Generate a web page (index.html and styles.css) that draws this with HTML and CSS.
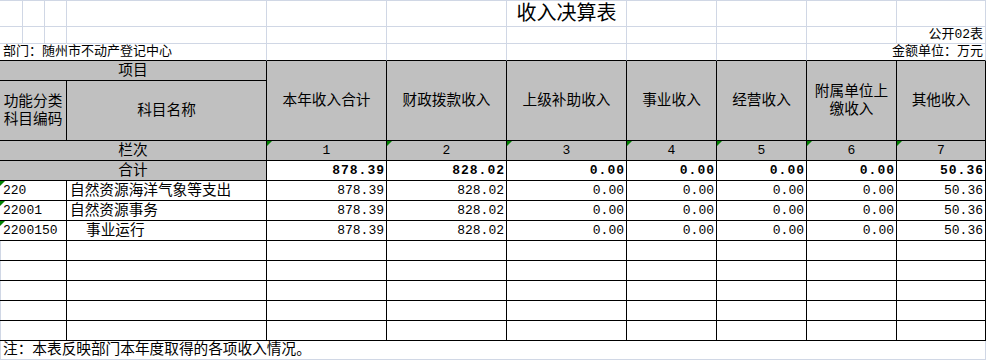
FILE: index.html
```html
<!DOCTYPE html>
<html lang="zh-CN">
<head>
<meta charset="utf-8">
<title>收入决算表</title>
<link rel="stylesheet" href="styles.css">
</head>
<body>
<div class="sheet">
  <!-- row 1: title -->
  <div class="c g top"></div><div class="c g top"></div><div class="c g top"></div><div class="c g top"></div>
  <div class="c g top"></div><div class="c g top"></div>
  <div class="c g top title">收入决算表</div>
  <div class="c g top"></div><div class="c g top"></div><div class="c g top"></div><div class="c g top"></div>
  <!-- row 2 -->
  <div class="c g"></div><div class="c g"></div><div class="c g"></div><div class="c g"></div>
  <div class="c g"></div><div class="c g"></div><div class="c g"></div><div class="c g"></div>
  <div class="c g"></div><div class="c g"></div>
  <div class="c g small right">公开02表</div>
  <!-- row 3 -->
  <div class="c g tb small left s4">部门：随州市不动产登记中心</div>
  <div class="c g tb"></div><div class="c g tb"></div><div class="c g tb"></div><div class="c g tb"></div><div class="c g tb"></div>
  <div class="c g tb small right s2">金额单位：万元</div>

  <!-- header -->
  <div class="c h s4">项目</div>
  <div class="c h r2">本年收入合计</div>
  <div class="c h r2">财政拨款收入</div>
  <div class="c h r2">上级补助收入</div>
  <div class="c h r2">事业收入</div>
  <div class="c h r2">经营收入</div>
  <div class="c h r2 ml">附属单位上<br>缴收入</div>
  <div class="c h r2">其他收入</div>
  <div class="c h s3 ml">功能分类<br>科目编码</div>
  <div class="c h">科目名称</div>

  <!-- 栏次 -->
  <div class="c h s4">栏次</div>
  <div class="c h t num">1</div>
  <div class="c h t num">2</div>
  <div class="c h t num">3</div>
  <div class="c h t num">4</div>
  <div class="c h t num">5</div>
  <div class="c h t num">6</div>
  <div class="c h t num">7</div>

  <!-- 合计 -->
  <div class="c h s4">合计</div>
  <div class="c n b">878.39</div>
  <div class="c n b">828.02</div>
  <div class="c n b">0.00</div>
  <div class="c n b">0.00</div>
  <div class="c n b">0.00</div>
  <div class="c n b">0.00</div>
  <div class="c n b">50.36</div>

  <!-- data rows -->
  <div class="c s3 code t num">220</div>
  <div class="c name">自然资源海洋气象等支出</div>
  <div class="c n">878.39</div><div class="c n">828.02</div><div class="c n">0.00</div><div class="c n">0.00</div><div class="c n">0.00</div><div class="c n">0.00</div><div class="c n">50.36</div>

  <div class="c s3 code t num">22001</div>
  <div class="c name">自然资源事务</div>
  <div class="c n">878.39</div><div class="c n">828.02</div><div class="c n">0.00</div><div class="c n">0.00</div><div class="c n">0.00</div><div class="c n">0.00</div><div class="c n">50.36</div>

  <div class="c s3 code t num">2200150</div>
  <div class="c name indent">事业运行</div>
  <div class="c n">878.39</div><div class="c n">828.02</div><div class="c n">0.00</div><div class="c n">0.00</div><div class="c n">0.00</div><div class="c n">0.00</div><div class="c n">50.36</div>

  <!-- empty rows -->
  <div class="c s3 edge"></div><div class="c"></div><div class="c"></div><div class="c"></div><div class="c"></div><div class="c"></div><div class="c"></div><div class="c"></div><div class="c"></div>
  <div class="c s3 edge"></div><div class="c"></div><div class="c"></div><div class="c"></div><div class="c"></div><div class="c"></div><div class="c"></div><div class="c"></div><div class="c"></div>
  <div class="c s3 edge"></div><div class="c"></div><div class="c"></div><div class="c"></div><div class="c"></div><div class="c"></div><div class="c"></div><div class="c"></div><div class="c"></div>
  <div class="c s3 edge"></div><div class="c"></div><div class="c"></div><div class="c"></div><div class="c"></div><div class="c"></div><div class="c"></div><div class="c"></div><div class="c"></div>
  <div class="c s3 edge"></div><div class="c"></div><div class="c"></div><div class="c"></div><div class="c"></div><div class="c"></div><div class="c"></div><div class="c"></div><div class="c"></div>

  <!-- note -->
  <div class="c g note edge left s11">注：本表反映部门本年度取得的各项收入情况。</div>
</div>
</body>
</html>
```

FILE: styles.css
```css
html, body {
  margin: 0;
  padding: 0;
  background: #ffffff;
}

body {
  font-family: "Liberation Mono", "Noto Sans CJK SC", monospace;
  font-size: 14.67px;
  color: #000000;
}

.sheet {
  display: grid;
  grid-template-columns: 23px 22px 22px 200px 120px 120px 120px 90px 90px 90px 89px;
  grid-template-rows: 27px 17px 17px 20px 60px repeat(10, 20px) 19px;
  width: 986px;
}

.c {
  position: relative;
  display: flex;
  align-items: center;
  justify-content: center;
  border-right: 1px solid #000000;
  border-bottom: 1px solid #000000;
  line-height: 18px;
  white-space: nowrap;
  min-width: 0;
}

.g {
  border-right-color: #d0d7e5;
  border-bottom-color: #d0d7e5;
}

.top {
  box-shadow: inset 0 1px 0 #d0d7e5;
}

.tb {
  border-bottom-color: #000000;
}

.title {
  font-size: 20px;
  line-height: 22px;
  padding-top: 3px;
  overflow: visible;
}

.small {
  font-size: 13px;
}

.right {
  justify-content: flex-end;
  padding-right: 2px;
}

.left {
  justify-content: flex-start;
  padding-left: 3px;
}

.s2 { grid-column: span 2; }
.s3 { grid-column: span 3; }
.s4 { grid-column: span 4; }
.s11 { grid-column: span 11; }
.r2 { grid-row: span 2; }

.h {
  background: #c0c0c0;
}

.ml {
  text-align: center;
  white-space: normal;
}

.num {
  font-size: 13px;
}

.t::before {
  content: "";
  position: absolute;
  left: 0;
  top: 0;
  border-top: 5px solid #008000;
  border-right: 5px solid transparent;
}

.n {
  justify-content: flex-end;
  padding-right: 2px;
  font-size: 13px;
}

.b {
  font-weight: bold;
  letter-spacing: 1px;
  padding-right: 1px;
}

.code {
  justify-content: flex-start;
  padding-left: 3px;
}

.name {
  justify-content: flex-start;
  padding-left: 3px;
}

.indent {
  padding-left: 19px;
}

.edge {
  box-shadow: inset 1px 0 0 #d0d7e5;
}

.note {
  padding-left: 3px;
}
```
